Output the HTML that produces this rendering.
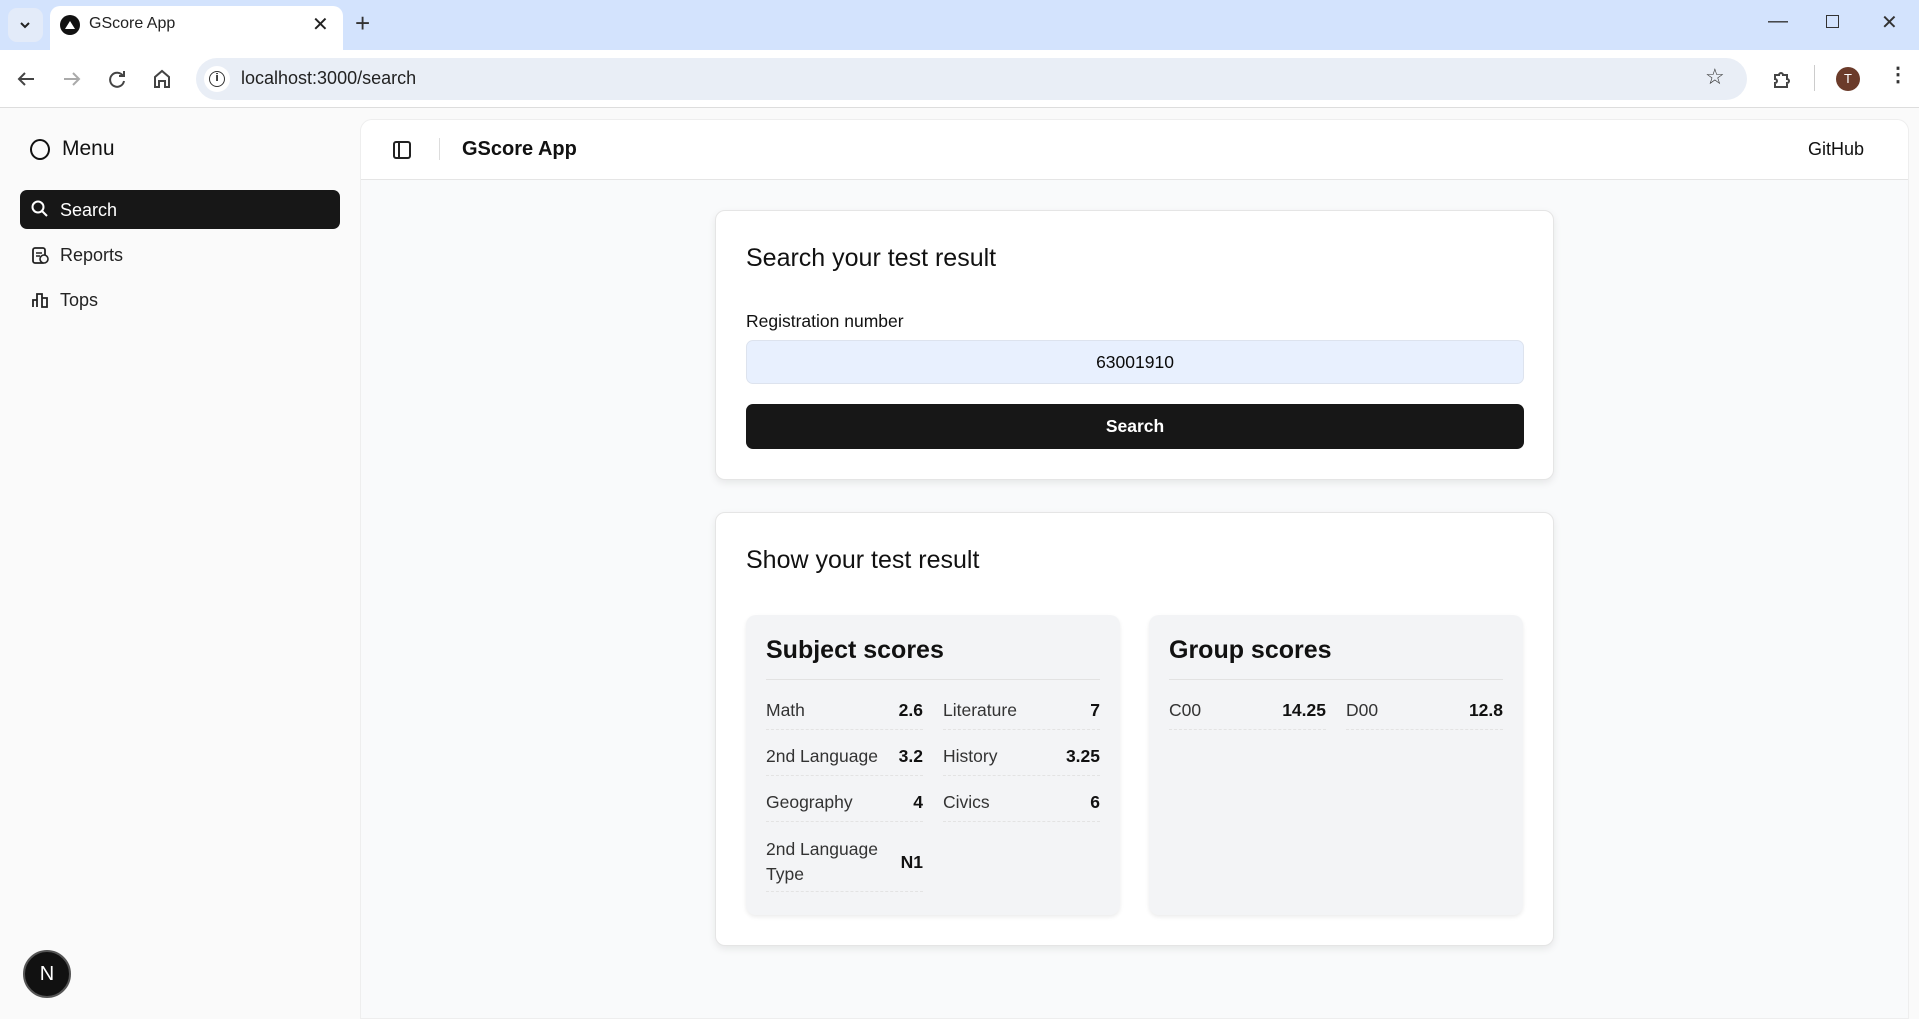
<!DOCTYPE html>
<html><head><meta charset="utf-8"><style>
*{box-sizing:border-box;margin:0;padding:0}
body{width:1919px;height:1013px;overflow:hidden;font-family:"Liberation Sans",sans-serif;background:#fafafa;position:relative;color:#0a0a0a}
.abs{position:absolute}
.tabbar{left:0;top:0;width:1919px;height:50px;background:#d3e3fd}
.tab{left:50px;top:6px;width:293px;height:44px;background:#fff;border-radius:10px 10px 0 0}
.toolbar{left:0;top:50px;width:1919px;height:58px;background:#fff;border-bottom:1px solid #ddd}
.url{left:196px;top:58px;width:1551px;height:42px;background:#e9eef6;border-radius:21px}
.ico{stroke:#444;fill:none;stroke-width:2}
.main{left:360px;top:119px;width:1549px;height:900px;background:#f9fafb;border-radius:12px 12px 0 0;border:1px solid #eee;overflow:hidden}
.hdr{left:0;top:0;width:100%;height:60px;background:#fff;border-bottom:1px solid #e5e5e5}
.card{background:#fff;border:1px solid #e5e5e5;border-radius:10px;box-shadow:0 3px 8px rgba(0,0,0,.08)}
.inner{background:#f3f4f6;border-radius:10px;box-shadow:0 2px 4px rgba(0,0,0,.08)}
.row{position:absolute;font-size:17.5px;color:#333;border-bottom:1px dashed #e3e3e3}
.row b{position:absolute;right:0;color:#111}
</style></head><body>
<div class="abs tabbar"></div>
<div class="abs" style="left:8px;top:8px;width:35px;height:34px;background:#e3ebf9;border-radius:9px"></div>
<svg class="abs" style="left:18px;top:18px" width="14" height="14"><path d="M3 5l4 4 4-4" stroke="#222" stroke-width="2" fill="none"/></svg>
<div class="abs tab"></div>
<div class="abs" style="left:60px;top:15px;width:20px;height:20px;border-radius:50%;background:#111"></div>
<svg class="abs" style="left:63px;top:18px" width="14" height="14"><path d="M7 3L12 11H2Z" fill="#fff"/></svg>
<div class="abs" style="left:89px;top:15px;font-size:16px;color:#222">GScore App</div>
<div class="abs" style="left:312px;top:12px;font-size:20px;color:#222">✕</div>
<div class="abs" style="left:355px;top:8px;font-size:26px;color:#333">+</div>
<div class="abs" style="left:1768px;top:10px;font-size:20px;color:#333">—</div>
<div class="abs" style="left:1826px;top:15px;width:13px;height:13px;border:1.5px solid #333"></div>
<div class="abs" style="left:1881px;top:10px;font-size:20px;color:#333">✕</div>
<div class="abs toolbar"></div>
<svg class="abs" style="left:14px;top:67px" width="24" height="24"><path class="ico" d="M20 12H5M11 6l-6 6 6 6"/></svg>
<svg class="abs" style="left:60px;top:67px" width="24" height="24"><path class="ico" style="stroke:#aaa" d="M4 12h15M13 6l6 6-6 6"/></svg>
<svg class="abs" style="left:105px;top:67px" width="24" height="24"><path class="ico" d="M18 9a7 7 0 1 0 1 5M19 4v5h-5"/></svg>
<svg class="abs" style="left:150px;top:67px" width="24" height="24"><path class="ico" d="M5 20V10l7-6 7 6v10h-4v-6H9v6z"/></svg>
<div class="abs url"></div>
<div class="abs" style="left:204px;top:66px;width:26px;height:26px;border-radius:50%;background:#fff"></div>
<div class="abs" style="left:209px;top:71px;width:16px;height:16px;border-radius:50%;border:1.8px solid #333;font-size:11px;text-align:center;line-height:13px;font-weight:bold">i</div>
<div class="abs" style="left:241px;top:68px;font-size:18px;color:#222">localhost:3000/search</div>
<div class="abs" style="left:1705px;top:64px;font-size:22px;color:#333">☆</div>
<svg class="abs" style="left:1770px;top:67px" width="24" height="24"><path class="ico" d="M5 8h4a2 2 0 0 1 4 0h4v4a2 2 0 0 1 0 4v4H5v-4a2 2 0 0 0 0-4z"/></svg>
<div class="abs" style="left:1814px;top:65px;width:1px;height:26px;background:#ccc"></div>
<div class="abs" style="left:1836px;top:67px;width:24px;height:24px;border-radius:50%;background:#6b3b2a;color:#fff;font-size:13px;text-align:center;line-height:24px">T</div>
<div class="abs" style="left:1888px;top:62px;font-size:20px;color:#333;font-weight:bold">⋮</div>

<div class="abs" style="left:30px;top:139px;width:20px;height:21px;border:2px solid #111;border-radius:50%"></div>
<div class="abs" style="left:62px;top:137px;font-size:21px;color:#111">Menu</div>
<div class="abs" style="left:20px;top:190px;width:320px;height:39px;background:#171717;border-radius:7px"></div>
<svg class="abs" style="left:30px;top:199px" width="20" height="20"><circle cx="8" cy="8" r="5.5" stroke="#fff" stroke-width="2" fill="none"/><path d="M12 12l5 5" stroke="#fff" stroke-width="2"/></svg>
<div class="abs" style="left:60px;top:200px;font-size:18px;color:#fff">Search</div>
<svg class="abs" style="left:30px;top:245px" width="20" height="20"><rect x="3" y="3" width="12" height="15" rx="2" stroke="#222" stroke-width="1.8" fill="none"/><circle cx="14" cy="14" r="4" fill="#fafafa" stroke="#222" stroke-width="1.6"/><path d="M6 8h6M6 11h4" stroke="#222" stroke-width="1.6"/></svg>
<div class="abs" style="left:60px;top:245px;font-size:18px;color:#222">Reports</div>
<svg class="abs" style="left:30px;top:290px" width="20" height="20"><path d="M3 17V10h4v7M7 17V4h5v13M12 17V8h5v9z" stroke="#222" stroke-width="1.8" fill="none"/></svg>
<div class="abs" style="left:60px;top:290px;font-size:18px;color:#222">Tops</div>
<div class="abs" style="left:23px;top:950px;width:48px;height:48px;border-radius:50%;background:#111;border:2px solid #555;color:#fff;font-size:20px;text-align:center;line-height:44px">N</div>

<div class="abs main">
 <div class="abs hdr"></div>
 <div class="abs" style="left:32px;top:21px;width:18px;height:18px;border:2px solid #222;border-radius:3px"></div>
 <div class="abs" style="left:37px;top:23px;width:2px;height:14px;background:#222"></div>
 <div class="abs" style="left:78px;top:18px;width:1px;height:22px;background:#ddd"></div>
 <div class="abs" style="left:101px;top:18px;font-size:20px;font-weight:bold;color:#111">GScore App</div>
 <div class="abs" style="left:1447px;top:19px;font-size:18px;color:#111">GitHub</div>

 <div class="abs card" style="left:354px;top:90px;width:839px;height:270px">
  <div class="abs" style="left:30px;top:33px;font-size:25px;color:#111">Search your test result</div>
  <div class="abs" style="left:30px;top:100px;font-size:17.5px;color:#111">Registration number</div>
  <div class="abs" style="left:30px;top:129px;width:778px;height:44px;background:#e8f0fe;border:1px solid #dde3ee;border-radius:7px;text-align:center;line-height:42px;font-size:17.5px">63001910</div>
  <div class="abs" style="left:30px;top:193px;width:778px;height:45px;background:#171717;border-radius:7px;text-align:center;line-height:45px;font-size:17.5px;color:#fff;font-weight:bold">Search</div>
 </div>

 <div class="abs card" style="left:354px;top:392px;width:839px;height:434px">
  <div class="abs" style="left:30px;top:33px;font-size:25px;color:#111">Show your test result</div>
  <div class="abs inner" style="left:30px;top:102px;width:374px;height:300px">
   <div class="abs" style="left:20px;top:21px;font-size:25px;font-weight:600;color:#111">Subject scores</div>
   <div class="abs" style="left:20px;top:64px;width:334px;height:1px;background:#e2e2e2"></div>
   <div class="row" style="left:20px;top:85px;width:157px;height:30px">Math<b>2.6</b></div>
   <div class="row" style="left:197px;top:85px;width:157px;height:30px">Literature<b>7</b></div>
   <div class="row" style="left:20px;top:131px;width:157px;height:30px">2nd Language<b>3.2</b></div>
   <div class="row" style="left:197px;top:131px;width:157px;height:30px">History<b>3.25</b></div>
   <div class="row" style="left:20px;top:177px;width:157px;height:30px">Geography<b>4</b></div>
   <div class="row" style="left:197px;top:177px;width:157px;height:30px">Civics<b>6</b></div>
   <div class="row" style="left:20px;top:222px;width:157px;height:55px;line-height:25px">2nd Language<br>Type<b style="top:13px">N1</b></div>
  </div>
  <div class="abs inner" style="left:433px;top:102px;width:374px;height:300px">
   <div class="abs" style="left:20px;top:21px;font-size:25px;font-weight:600;color:#111">Group scores</div>
   <div class="abs" style="left:20px;top:64px;width:334px;height:1px;background:#e2e2e2"></div>
   <div class="row" style="left:20px;top:85px;width:157px;height:30px">C00<b>14.25</b></div>
   <div class="row" style="left:197px;top:85px;width:157px;height:30px">D00<b>12.8</b></div>
  </div>
 </div>
</div>
</body></html>
